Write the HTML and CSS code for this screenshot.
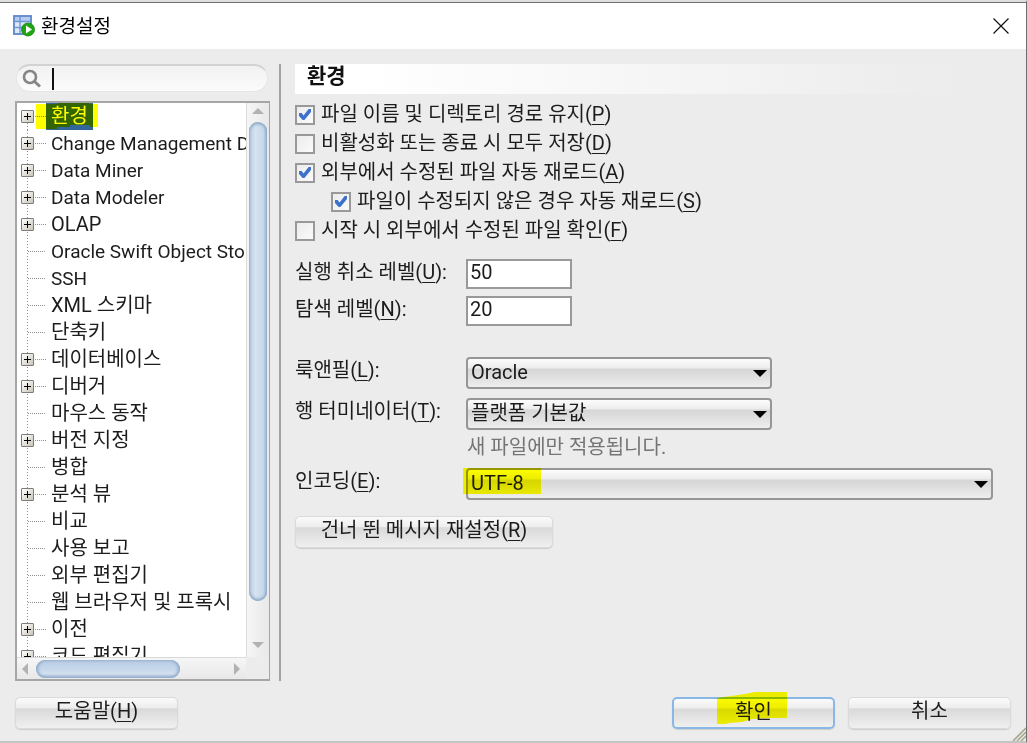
FILE: index.html
```html
<!DOCTYPE html>
<html lang="ko">
<head>
<meta charset="utf-8">
<title>환경설정</title>
<link rel="stylesheet" href="styles.css">
</head>
<body>
<div class="dialog">
  <header class="titlebar">
    <svg class="app-icon" width="22" height="22" viewBox="0 0 22 22" aria-hidden="true">
      <rect x="1" y="1" width="17" height="18" fill="#dde9f8" stroke="#5b86c8" stroke-width="1.8"/>
      <rect x="2" y="2" width="15" height="4" fill="#b4cdf0"/>
      <path d="M1 6.5h17M1 12.5h17M7 2v17" stroke="#7097d4" stroke-width="1.4"/>
      <circle cx="15" cy="14.5" r="6.5" fill="#1fa512" stroke="#128509" stroke-width=".8"/>
      <path d="M13 10.500l6 4-6 4z" fill="#fff"/>
    </svg>
    <h1 class="title">환경설정</h1>
    <button class="close" type="button" aria-label="닫기">
      <svg width="16" height="16" viewBox="0 0 16 16"><path d="M.5.5l15 15M15.5.5l-15 15" stroke="#111" stroke-width="1.2"/></svg>
    </button>
  </header>

  <main class="content">
    <aside class="sidebar">
      <div class="search">
        <svg width="20" height="20" viewBox="0 0 20 20" aria-hidden="true"><circle cx="8" cy="8" r="6" fill="none" stroke="#858585" stroke-width="2.6"/><path d="M12.500 12.500l5.500 5" stroke="#858585" stroke-width="3"/></svg>
        <span class="caret"></span>
        <input class="search-input" type="text" aria-label="검색">
      </div>
      <div class="tree">
        <ul class="nodes">
          <li class="node first"><button class="expander" type="button" aria-label="펼치기"></button><span class="dots"></span><span class="name selected">환경</span>
            <svg class="marker marker-tree" width="62" height="30" viewBox="0 0 62 30" aria-hidden="true"><path d="M0 4h22V1h31v3h9v23h-8v-2H34v2H21v2H0z" fill="#ff0"/></svg></li>
          <li class="node"><button class="expander" type="button" aria-label="펼치기"></button><span class="dots"></span><span class="name latin">Change Management D</span></li>
          <li class="node"><button class="expander" type="button" aria-label="펼치기"></button><span class="dots"></span><span class="name latin">Data Miner</span></li>
          <li class="node"><button class="expander" type="button" aria-label="펼치기"></button><span class="dots"></span><span class="name latin">Data Modeler</span></li>
          <li class="node"><button class="expander" type="button" aria-label="펼치기"></button><span class="dots"></span><span class="name">OLAP</span></li>
          <li class="node leaf"><span class="dots"></span><span class="name latin">Oracle Swift Object Sto</span></li>
          <li class="node leaf"><span class="dots"></span><span class="name latin">SSH</span></li>
          <li class="node leaf"><span class="dots"></span><span class="name">XML 스키마</span></li>
          <li class="node leaf"><span class="dots"></span><span class="name">단축키</span></li>
          <li class="node"><button class="expander" type="button" aria-label="펼치기"></button><span class="dots"></span><span class="name">데이터베이스</span></li>
          <li class="node"><button class="expander" type="button" aria-label="펼치기"></button><span class="dots"></span><span class="name">디버거</span></li>
          <li class="node leaf"><span class="dots"></span><span class="name">마우스 동작</span></li>
          <li class="node"><button class="expander" type="button" aria-label="펼치기"></button><span class="dots"></span><span class="name">버전 지정</span></li>
          <li class="node leaf"><span class="dots"></span><span class="name">병합</span></li>
          <li class="node"><button class="expander" type="button" aria-label="펼치기"></button><span class="dots"></span><span class="name">분석 뷰</span></li>
          <li class="node leaf"><span class="dots"></span><span class="name">비교</span></li>
          <li class="node leaf"><span class="dots"></span><span class="name">사용 보고</span></li>
          <li class="node leaf"><span class="dots"></span><span class="name">외부 편집기</span></li>
          <li class="node leaf"><span class="dots"></span><span class="name">웹 브라우저 및 프록시</span></li>
          <li class="node"><button class="expander" type="button" aria-label="펼치기"></button><span class="dots"></span><span class="name">이전</span></li>
          <li class="node"><button class="expander" type="button" aria-label="펼치기"></button><span class="dots"></span><span class="name">코드 편집기</span></li>
        </ul>
        <div class="vscroll"><span class="arrow up"></span><span class="vthumb"></span><span class="arrow down"></span></div>
        <div class="hscroll"><span class="arrow left"></span><span class="hthumb"></span><span class="arrow right"></span></div>
      </div>
    </aside>

    <section class="panel">
      <h2 class="panel-title">환경</h2>
      <div class="checks">
        <label class="check"><input type="checkbox" checked><span>파일 이름 및 디렉토리 경로 유지(<u>P</u>)</span></label>
        <label class="check"><input type="checkbox"><span>비활성화 또는 종료 시 모두 저장(<u>D</u>)</span></label>
        <label class="check"><input type="checkbox" checked><span>외부에서 수정된 파일 자동 재로드(<u>A</u>)</span></label>
        <label class="check nested"><input type="checkbox" checked><span>파일이 수정되지 않은 경우 자동 재로드(<u>S</u>)</span></label>
        <label class="check"><input type="checkbox"><span>시작 시 외부에서 수정된 파일 확인(<u>F</u>)</span></label>
      </div>
      <div class="fields levels">
        <label for="undo">실행 취소 레벨(<u>U</u>):</label><input class="number" id="undo" type="text" value="50">
        <label for="nav">탐색 레벨(<u>N</u>):</label><input class="number" id="nav" type="text" value="20">
      </div>
      <div class="fields choices">
        <label for="laf">룩앤필(<u>L</u>):</label>
        <div class="combo"><select id="laf"><option>Oracle</option></select></div>
        <label for="eol">행 터미네이터(<u>T</u>):</label>
        <div class="combo"><select id="eol"><option>플랫폼 기본값</option></select></div>
      </div>
      <div class="fields encoding">
        <p class="hint">새 파일에만 적용됩니다.</p>
        <label for="enc">인코딩(<u>E</u>):</label>
        <div class="combo wide"><select id="enc"><option>UTF-8</option></select><span class="marker marker-combo"></span></div>
      </div>
      <button class="button reset" type="button">건너 뛴 메시지 재설정(<u>R</u>)</button>
    </section>
  </main>

  <footer class="footer">
    <button class="button help" type="button">도움말(<u>H</u>)</button>
    <button class="button primary" type="button">확인
      <svg class="marker marker-ok" width="70" height="32" viewBox="0 0 70 32" aria-hidden="true"><path d="M0 6l14-2 14-2 10-2h32v26H52l-17 1-10 3-13 1-3 1H0z" fill="#ff0"/></svg>
    </button>
    <button class="button" type="button">취소</button>
    <svg class="grip" width="14" height="14" viewBox="0 0 14 14" aria-hidden="true"><path d="M1 14L14 1M5 14l9-9M9 14l5-5" stroke="#a9a990" stroke-width="1.6"/></svg>
  </footer>
</div>
</body>
</html>
```

FILE: styles.css
```css
* { box-sizing: border-box; }

body {
  margin: 0;
  background: #ececec;
  color: #1c1c1c;
  font: 20px/27px Roboto, "Noto Sans CJK KR", sans-serif;
}

button, input, select { font: inherit; color: inherit; }

u { text-underline-offset: 3px; text-decoration-thickness: 1px; }

.dialog {
  display: flex;
  flex-direction: column;
  height: 100vh;
  border-top: 2px solid #dfdfdf;
  border-right: 1px solid #6e6e6e;
  border-bottom: 2px solid #c4c4c4;
}

.titlebar {
  display: flex;
  align-items: center;
  flex: none;
  height: 47px;
  padding: 0 17px 0 13px;
  border-top: 1px solid #6e6e6e;
  background: #fff;
}

.title {
  flex: 1;
  margin: 0 0 0 6px;
  color: #000;
  font-size: 19px;
  font-weight: 400;
}

.close {
  display: flex;
  padding: 0;
  border: 0;
  background: none;
}

.content {
  display: flex;
  flex: 1;
  min-height: 0;
  padding: 15px 33px 0 15px;
}

.sidebar {
  display: flex;
  flex-direction: column;
  flex: none;
  width: 266px;
  padding-right: 9px;
  border-right: 2px solid #a2a2a2;
}

.search {
  display: flex;
  align-items: center;
  flex: none;
  height: 28px;
  margin: 0 2px 9px 1px;
  padding-left: 5px;
  border: 1px solid #e6e6e6;
  border-top: 2px solid #d2d2d2;
  border-radius: 14px;
  background: linear-gradient(#f2f2f2, #fbfbfb);
}

.caret {
  flex: none;
  width: 2px;
  height: 22px;
  margin-left: 10px;
  background: #111;
}

.search-input {
  flex: 1;
  min-width: 0;
  height: 22px;
  padding: 0;
  border: 0;
  outline: 0;
  background: none;
}

.tree {
  display: grid;
  grid-template: minmax(0, 1fr) 22px / minmax(0, 1fr) 23px;
  flex: 1;
  min-height: 0;
  border: 2px solid #a6a6a6;
  border-right-width: 1px;
}

.nodes {
  margin: 0;
  padding: 0;
  overflow: hidden;
  background: #fff;
  list-style: none;
}

.node {
  position: relative;
  display: flex;
  align-items: center;
  height: 27px;
  padding-left: 4px;
  background: repeating-linear-gradient(#8e8e8e 0 1px, #fff 1px 3px) 10px 0 / 1px 100% no-repeat;
}

.node.first { background-position: 10px 100%; background-size: 1px 50%; }
.node.leaf { padding-left: 10px; }

.expander {
  flex: none;
  width: 13px;
  height: 13px;
  padding: 0;
  border: 1px solid #7c7c7c;
  border-radius: 1px;
  background:
    linear-gradient(#000, #000) center / 7px 1px no-repeat,
    linear-gradient(#000, #000) center / 1px 7px no-repeat,
    linear-gradient(135deg, #fff, #c9c5b8);
}

.dots {
  flex: none;
  width: 12px;
  height: 1px;
  background: repeating-linear-gradient(90deg, #fff 0 1px, #8e8e8e 1px 2px);
}

.leaf .dots { width: 19px; }

.name {
  flex: none;
  padding: 0 5px;
  white-space: nowrap;
}

.latin { font-size: 19px; }

.selected { background: #33669a; color: #fff; }

.marker {
  position: absolute;
  mix-blend-mode: multiply;
  pointer-events: none;
}

.marker-tree { top: -3px; left: 19px; }

.vscroll {
  display: flex;
  flex-direction: column;
  align-items: center;
  padding: 5px 0 9px;
  border-left: 1px solid #dadada;
  background: linear-gradient(90deg, #f6f6f6, #e8e8e8);
}

.vthumb {
  width: 18px;
  height: 479px;
  margin: 8px 0 auto;
  border-radius: 9px;
  background: linear-gradient(90deg, #b9cce2, #d6e3f0 35%, #c5d8eb 80%, #9fb6d2);
  box-shadow: inset 0 2px 3px #8fa9c8, inset 0 -2px 3px #8fa9c8;
}

.hscroll {
  display: flex;
  align-items: center;
  padding: 0 6px 0 5px;
  border-top: 1px solid #dadada;
  background: linear-gradient(#f6f6f6, #e8e8e8);
}

.tree::after { content: ""; background: #ececec; }

.hthumb {
  width: 144px;
  height: 18px;
  margin: 0 auto 0 8px;
  border-radius: 9px;
  background: linear-gradient(#b9cce2, #c2d5ea 40%, #d0dfed 75%, #9fb6d2);
  box-shadow: inset 2px 0 3px #8fa9c8, inset -2px 0 3px #8fa9c8;
}

.arrow { flex: none; border: 6px solid transparent; }
.up { border-top: 0; border-bottom-color: #b2b2b2; }
.down { border-bottom: 0; border-top-color: #b2b2b2; }
.left { border-left: 0; border-right-color: #b2b2b2; }
.right { border-right: 0; border-left-color: #b2b2b2; }

.panel {
  flex: 1;
  min-width: 0;
  padding-left: 14px;
}

.panel-title {
  height: 30px;
  margin: 0;
  padding-left: 12px;
  background: linear-gradient(90deg, #fff 10%, #ececec 94%);
  color: #111;
  font-size: 21px;
  line-height: 24px;
}

.checks { padding: 6px 0 14px; }

.check {
  display: flex;
  align-items: center;
  gap: 6px;
  height: 29px;
}

.nested { margin-left: 36px; }

.check input {
  display: grid;
  place-items: center;
  appearance: none;
  flex: none;
  width: 20px;
  height: 20px;
  margin: 0;
  border: 2px solid #999;
  background: linear-gradient(135deg, #ececec, #fafafa);
}

.check input:checked::before {
  content: "";
  width: 12px;
  height: 12px;
  background: #3d72c9;
  clip-path: polygon(0 38%, 22% 38%, 38% 58%, 80% 4%, 100% 4%, 100% 30%, 45% 96%, 30% 96%, 0 62%);
}

.fields {
  display: grid;
  grid-template-columns: 171px minmax(0, 1fr);
}

.levels { row-gap: 7px; }
.choices { row-gap: 9px; margin-top: 31px; }

.number {
  width: 106px;
  height: 30px;
  padding: 0 2px 4px;
  border: 2px solid #999;
  background: #fff;
}

.combo {
  position: relative;
  display: grid;
  align-items: center;
  width: 306px;
}

.combo.wide { width: 100%; }

.combo select {
  grid-area: 1 / 1;
  width: 100%;
  height: 32px;
  padding: 0 28px 2px 3px;
  appearance: none;
  border: 2px solid #969696;
  border-radius: 4px;
  background: linear-gradient(#fcfcfc, #ececec 32%, #d6d6d6 36%, #dcdcdc 55%, #eee);
}

.combo::after {
  content: "";
  grid-area: 1 / 1;
  justify-self: end;
  margin-right: 5px;
  border: 7px solid transparent;
  border-top: 7px solid #000;
  border-bottom: 0;
  pointer-events: none;
}

.marker-combo {
  top: 0;
  left: -3px;
  width: 78px;
  height: 26px;
  background: #ff0;
}

.hint {
  grid-column: 2;
  margin: 0;
  padding: 4px 0 7px 1px;
  color: #757575;
}

.button {
  position: relative;
  width: 163px;
  height: 32px;
  padding: 0 0 5px;
  border: 1px solid #dadada;
  border-radius: 5px;
  background: linear-gradient(#fafafa, #eee 32%, #d9d9d9 36%, #dedede 50%, #f0f0f0);
  box-shadow: 0 1px 1px #cecece;
}

.reset { width: 258px; margin-top: 16px; }

.footer {
  position: relative;
  display: flex;
  flex: none;
  gap: 13px;
  padding: 16px 15px 12px;
}

.help { margin-right: auto; }
.primary { border: 2px solid #8ab8e6; }
.marker-ok { top: -7px; left: 43px; }
.grip { position: absolute; right: 0; bottom: 0; }
```
